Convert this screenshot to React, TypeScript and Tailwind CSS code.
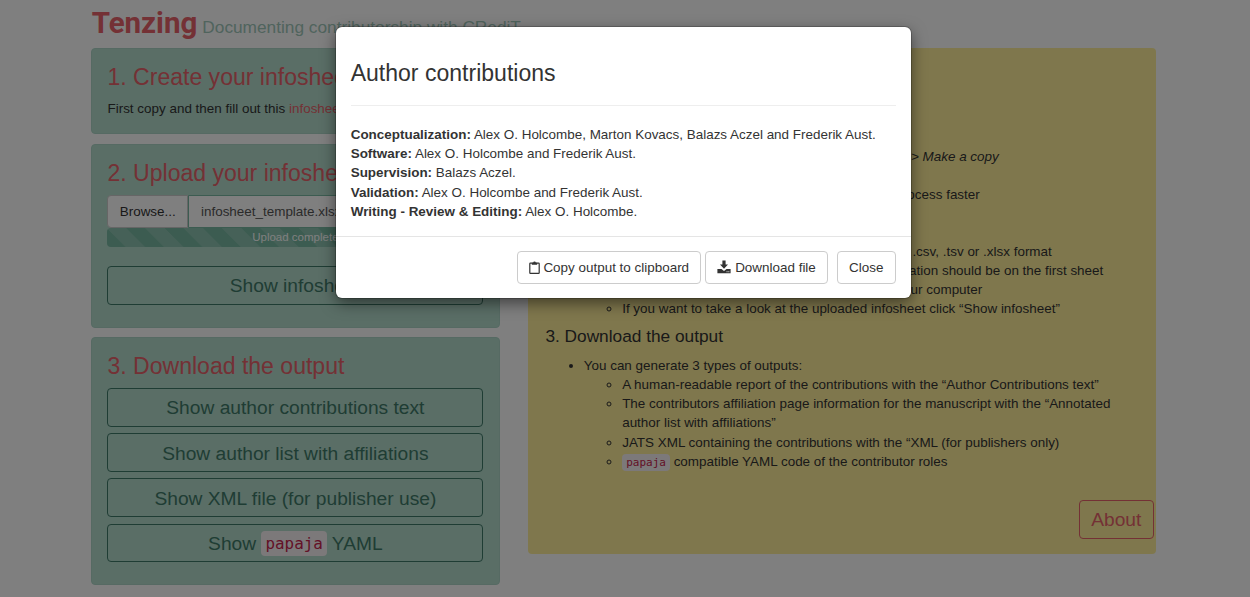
import type { ReactNode } from "react";

const Heading = ({ children }: { children: ReactNode }) => (
  <h3 className="h-[26px] whitespace-nowrap text-[23.04px] leading-[26px] text-[#e8626a]">{children}</h3>
);

const BigButton = ({ children }: { children: ReactNode }) => (
  <button className="flex h-[38.6px] w-full shrink-0 items-center justify-center whitespace-pre rounded-[4px] border border-[#3f7a68] pt-[2px] text-[19.2px] leading-[26px] text-[#3f7a68]">
    {children}
  </button>
);

const Panel = ({ className, children }: { className: string; children: ReactNode }) => (
  <section className={"flex flex-col rounded-[4px] border border-[#acd5c7] bg-[#b4dccd] px-[15.3px] " + className}>
    {children}
  </section>
);

const ModalButton = ({ className, children }: { className: string; children: ReactNode }) => (
  <button className={"flex h-[32.5px] items-center justify-center whitespace-nowrap rounded-[4px] border border-[#ccc] " + className}>
    {children}
  </button>
);

const contributions = [
  ["Conceptualization:", "Alex O. Holcombe, Marton Kovacs, Balazs Aczel and Frederik Aust."],
  ["Software:", "Alex O. Holcombe and Frederik Aust."],
  ["Supervision:", "Balazs Aczel."],
  ["Validation:", "Alex O. Holcombe and Frederik Aust."],
  ["Writing - Review & Editing:", "Alex O. Holcombe."],
];

export default function App() {
  return (
    <div className="relative h-[597px] w-[1250px] overflow-hidden bg-white font-['Liberation_Sans',Arial,sans-serif] text-[13.44px] leading-[19.2px] text-[#333]">
      <div className="pl-[91.2px] pt-[6px]">
        <header className="flex h-[42px] items-baseline gap-[5px] whitespace-nowrap leading-[34px]">
          <h1 className="ml-[0.5px] font-['Roboto',sans-serif] text-[29.5px] font-bold text-[#e8626a]">Tenzing</h1>
          <span className="text-[17.28px] text-[#a0c8ba]">Documenting contributorship with CRediT</span>
        </header>
        <main className="flex items-start gap-[28.8px]">
          <div className="flex w-[408.4px] shrink-0 flex-col gap-[9.6px]">
            <Panel className="h-[86.4px] pt-[15px]">
              <Heading>1. Create your infosheet</Heading>
              <p className="mt-[9px] whitespace-nowrap">
                First copy and then fill out this <a className="text-[#e8626a]">infosheet</a>
              </p>
            </Panel>
            <Panel className="h-[183.6px] pt-[15px]">
              <Heading>2. Upload your infosheet</Heading>
              <div className="mt-[9.5px] flex h-[32.5px] shrink-0">
                <button className="flex w-[80.5px] items-center justify-center rounded-l-[4px] border border-[#ccc] bg-white">Browse...</button>
                <div className="flex flex-1 items-center rounded-r-[4px] border border-[#78b8a2] bg-white pl-[12px] text-[#555]">infosheet_template.xlsx</div>
              </div>
              <div className="h-[19.2px] shrink-0 rounded-[4px] bg-[#78b8a2] bg-[linear-gradient(45deg,rgba(255,255,255,.15)_25%,transparent_25%,transparent_50%,rgba(255,255,255,.15)_50%,rgba(255,255,255,.15)_75%,transparent_75%)] bg-[length:38.4px_38.4px] text-center text-[11.52px] leading-[19.2px] text-white">
                Upload complete
              </div>
              <div className="mt-[18.8px]">
                <BigButton>Show infosheet</BigButton>
              </div>
            </Panel>
            <Panel className="h-[248px] pt-[14.6px]">
              <Heading>3. Download the output</Heading>
              <div className="mt-[9.3px] flex flex-col gap-[6.6px]">
                <BigButton>Show author contributions text</BigButton>
                <BigButton>Show author list with affiliations</BigButton>
                <BigButton>Show XML file (for publisher use)</BigButton>
                <BigButton>
                  {"Show "}
                  <code className="rounded-[4px] bg-[#f9f2f4] px-[4px] font-['DejaVu_Sans_Mono',monospace] text-[15.9px] leading-[25px] text-[#c7254e]">papaja</code>
                  {" YAML"}
                </BigButton>
              </div>
            </Panel>
          </div>
          <aside className="flex h-[506.2px] w-[627.4px] shrink-0 flex-col whitespace-nowrap rounded-[4px] bg-[#ffef9b] pl-[17px]">
            <h3 className="mt-[15.2px] h-[35px] text-[23px] leading-[26px]">How to use Tenzing</h3>
            <h4 className="h-[29.5px] text-[17.28px]">1. Create your infosheet</h4>
            <ul className="ml-[38.4px] list-disc">
              <li>
                Fill out the infosheet
                <ul className="list-none">
                  <li className="w-[415px] text-right">Create a copy of the template by clicking <i>File &gt; Make a copy</i></li>
                  <li className="pl-[38.4px]">Fill out the copied infosheet</li>
                  <li className="w-[396px] text-right">You can prefill the names to make the process faster</li>
                </ul>
              </li>
            </ul>
            <h4 className="mt-[9px] h-[28px] text-[17.28px]">2. Upload your infosheet</h4>
            <ul className="ml-[38.4px] list-none">
              <li className="w-[468px] text-right">Download the infosheet to your computer in .csv, .tsv or .xlsx format</li>
              <li className="w-[519.5px] text-right">The contributor information should be on the first sheet</li>
              <li className="w-[398.5px] text-right">Upload the infosheet from your computer</li>
            </ul>
            <ul className="ml-[76.8px] list-[circle]">
              <li>If you want to take a look at the uploaded infosheet click “Show infosheet”</li>
            </ul>
            <h4 className="mt-[8.5px] h-[29px] text-[17.28px]">3. Download the output</h4>
            <ul className="ml-[38.4px] list-disc">
              <li>
                You can generate 3 types of outputs:
                <ul className="ml-[38.4px] list-[circle]">
                  <li>A human-readable report of the contributions with the “Author Contributions text”</li>
                  <li>The contributors affiliation page information for the manuscript with the “Annotated<br />author list with affiliations”</li>
                  <li>JATS XML containing the contributions with the “XML (for publishers only)</li>
                  <li>
                    <code className="rounded-[4px] bg-[#f9f2f4] px-[4px] py-[2px] font-['DejaVu_Sans_Mono',monospace] text-[11px] text-[#c7254e]">papaja</code> compatible YAML code of the contributor roles
                  </li>
                </ul>
              </li>
            </ul>
            <button className="mr-[2px] mt-[28px] flex h-[38.6px] w-[75px] shrink-0 items-center justify-center self-end rounded-[4px] border border-[#e8626a] text-[19.2px] text-[#e8626a]">About</button>
          </aside>
        </main>
      </div>

      <div className="absolute inset-0 flex items-start bg-black/50 pl-[336px] pt-[26.5px]">
        <div className="flex h-[271.5px] w-[575px] flex-col rounded-[6px] bg-white shadow-[0_5px_15px_rgba(0,0,0,0.5),0_0_0_1px_rgba(0,0,0,0.2)]">
          <div className="px-[14.7px] pt-[33px]">
            <h3 className="h-[46px] border-b border-[#eee] text-[23.04px] leading-[26px]">Author contributions</h3>
            <div className="mt-[19.5px]">
              {contributions.map(([role, names]) => (
                <p key={role} className="whitespace-nowrap">
                  <b>{role}</b> {names}
                </p>
              ))}
            </div>
          </div>
          <div className="mt-auto flex h-[62.5px] items-start border-t border-[#e5e5e5] pl-[181px] pt-[14.5px]">
            <ModalButton className="w-[184px] gap-[3.5px]">
              <svg viewBox="0 0 11 13" className="h-[13px] w-[11px]" fill="none" stroke="#333" strokeWidth="1.2">
                <rect x="0.8" y="2.1" width="9.4" height="10.2" rx="0.6" />
                <path d="M2.8 1.7h1.4a1.3 1.3 0 0 1 2.6 0h1.4v2.1H2.8z" fill="#333" stroke="none" />
              </svg>
              Copy output to clipboard
            </ModalButton>
            <ModalButton className="ml-[4px] w-[123px] gap-[4px]">
              <svg viewBox="0 0 14 14" className="size-[14px]" fill="#333">
                <path d="M5.4 0.5h3.2v4H11L7 8.8 3 4.5h2.4z" />
                <path fillRule="evenodd" d="M0.4 9h4.1L7 11l2.5-2h4.1v4.3H0.4zM9.6 11.3v.9h.9v-.9zm1.8 0v.9h.9v-.9z" />
              </svg>
              Download file
            </ModalButton>
            <ModalButton className="ml-[8.5px] w-[59.5px]">Close</ModalButton>
          </div>
        </div>
      </div>
    </div>
  );
}
